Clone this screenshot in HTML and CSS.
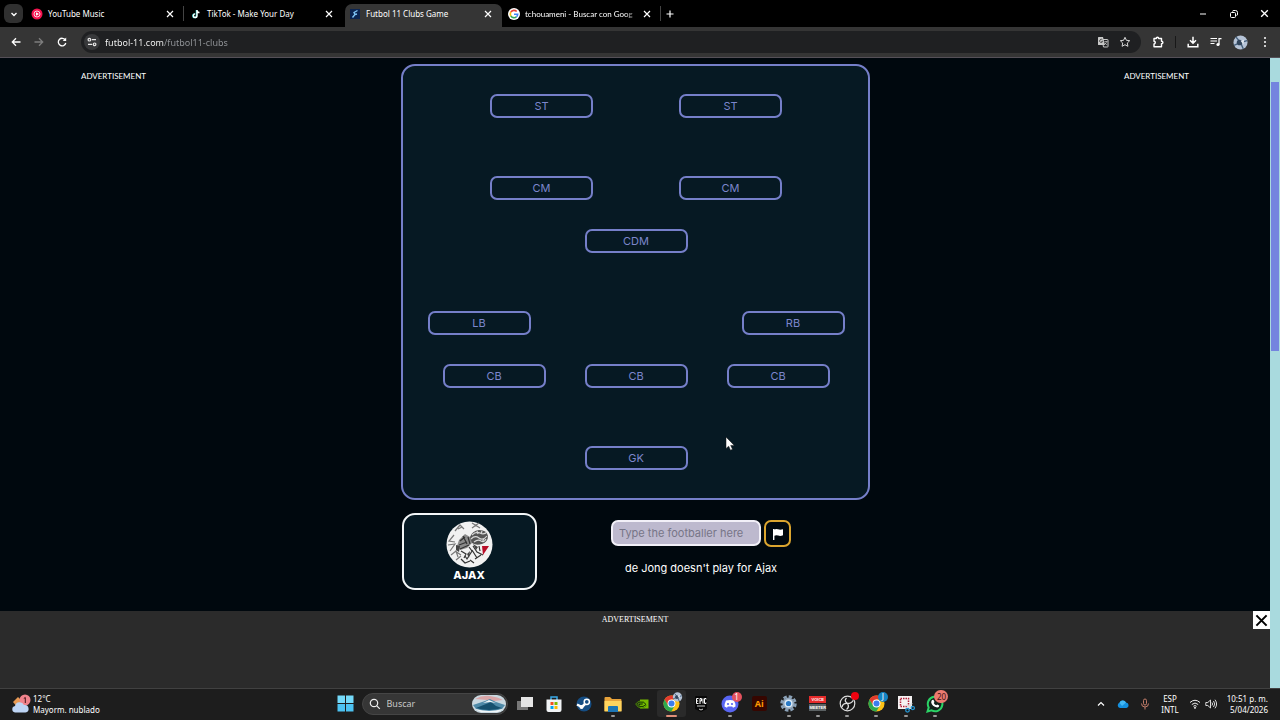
FILE: index.html
```
<!DOCTYPE html>
<html lang="en">
<head>
    <meta charset="UTF-8">
    <meta name="viewport" content="width=device-width, initial-scale=1.0">
    <title>Futbol 11 Clubs Game</title>
    <link rel="stylesheet" href="styles.css">
</head>
<body>
    <!-- Shared icons -->
    <svg class="sprite" aria-hidden="true">
        <symbol id="close" viewBox="0 0 10 10"><path d="M2 2l6 6M8 2L2 8" stroke="currentColor" stroke-width="1.2" fill="none"/></symbol>
        <symbol id="chrome" viewBox="0 0 18 18">
            <circle cx="9" cy="9" r="8.5" fill="#fbc116"/>
            <path d="M1.6 4.8A8.5 8.5 0 0 1 16.4 4.8H9L5.4 11z" fill="#e33b2e"/>
            <path d="M1.6 4.8A8.5 8.5 0 0 0 8.8 17.5L12.6 11H5.4z" fill="#2da94f"/>
            <circle cx="9" cy="9" r="4.2" fill="#fff"/>
            <circle cx="9" cy="9" r="3.2" fill="#3b7ded"/>
        </symbol>
        <symbol id="avatar" viewBox="0 0 16 16">
            <circle cx="8" cy="8" r="7.5" fill="#b5c3d6"/>
            <path d="M8 8L3 2M8 8L15 6M8 8l3 7M8 8l-7 3" stroke="#46617d" stroke-width="1.5"/>
            <circle cx="7" cy="8" r="3" fill="#31455c"/>
            <path d="M8 6l4-1-1 5z" fill="#e3eaf2"/>
        </symbol>
    </svg>

    <!-- Tab strip -->
    <header class="tab-strip">
        <button class="tab-search" aria-label="Search tabs">
            <svg width="10" height="10" viewBox="0 0 10 10"><path d="M2.5 4L5 6.500 7.500 4" fill="none" stroke="#fff" stroke-width="1.400"/></svg>
        </button>
        <div class="tab divided">
            <svg width="12" height="12" viewBox="0 0 12 12"><circle cx="6" cy="6" r="5.500" fill="#f5134f"/><circle cx="6" cy="6" r="3" fill="none" stroke="#fff" stroke-width=".8"/><path d="M5 4.300L8 6 5 7.700z" fill="#fff"/></svg>
            <button class="tab-title">YouTube Music</button>
            <button class="tab-close" aria-label="Close tab"><svg width="10" height="10"><use href="#close"/></svg></button>
        </div>
        <div class="tab">
            <svg width="12" height="12" viewBox="0 0 12 12"><path d="M6.500 2v5.700a1.800 1.800 0 1 1-1.800-1.800" fill="none" stroke="#26d6d0" stroke-width="1.500"/><path d="M7 2v5.700a1.800 1.800 0 1 1-1.800-1.800M7 2.300Q7.500 4.500 9.500 4.500" fill="none" stroke="#fff" stroke-width="1.400"/></svg>
            <button class="tab-title">TikTok - Make Your Day</button>
            <button class="tab-close" aria-label="Close tab"><svg width="10" height="10"><use href="#close"/></svg></button>
        </div>
        <div class="tab active">
            <svg width="12" height="12" viewBox="0 0 12 12"><rect x="1" y="1" width="10" height="10" fill="#0b2450"/><path d="M8.500 2.500L5 4.500l1 2-2.500 3M6 6.500l2-.5" fill="none" stroke="#7fc4f5" stroke-width="1.400"/></svg>
            <button class="tab-title">Futbol 11 Clubs Game</button>
            <button class="tab-close" aria-label="Close tab"><svg width="10" height="10"><use href="#close"/></svg></button>
        </div>
        <div class="tab divided">
            <svg width="12" height="12" viewBox="0 0 12 12"><circle cx="6" cy="6" r="6" fill="#fff"/><g fill="none" stroke-width="1.600"><path d="M8.700 3.500A3.700 3.700 0 0 0 2.800 4.200" stroke="#ea4335"/><path d="M2.800 4.200a3.700 3.700 0 0 0 0 3.600" stroke="#fbbc05"/><path d="M2.800 7.800a3.700 3.700 0 0 0 5.600 1" stroke="#34a853"/><path d="M8.400 8.800A3.700 3.700 0 0 0 9.700 6.200H6" stroke="#4285f4"/></g></svg>
            <button class="tab-title faded">tchouameni - Buscar con Goog</button>
            <button class="tab-close" aria-label="Close tab"><svg width="10" height="10"><use href="#close"/></svg></button>
        </div>
        <button class="new-tab" aria-label="New tab">
            <svg width="10" height="10" viewBox="0 0 10 10"><path d="M5 1.500v7M1.500 5h7" stroke="#fff" stroke-width="1.200"/></svg>
        </button>
        <div class="window-controls">
            <button aria-label="Minimize"><svg width="10" height="10" viewBox="0 0 10 10"><path d="M2 5h6" stroke="#fff"/></svg></button>
            <button aria-label="Restore"><svg width="10" height="10" viewBox="0 0 10 10" fill="none" stroke="#fff"><rect x="1.500" y="3.500" width="5" height="5" rx="1"/><path d="M3.500 2.500Q3.500 1.500 5 1.500h1.500q2 0 2 2V5q0 1.500-1 1.500"/></svg></button>
            <button aria-label="Close window"><svg width="11" height="11"><use href="#close"/></svg></button>
        </div>
    </header>

    <!-- Address bar -->
    <nav class="toolbar">
        <button aria-label="Back"><svg width="12" height="12" viewBox="0 0 12 12"><path d="M10.500 6H2.500M6 2.300L2.300 6 6 9.700" fill="none" stroke="#fff" stroke-width="1.300"/></svg></button>
        <button aria-label="Forward"><svg width="12" height="12" viewBox="0 0 12 12"><path d="M1.500 6h8M6 2.300L9.700 6 6 9.700" fill="none" stroke="#7d7d7d" stroke-width="1.300"/></svg></button>
        <button aria-label="Reload"><svg width="12" height="12" viewBox="0 0 12 12"><path d="M9.300 4A3.800 3.800 0 1 0 9.800 7" fill="none" stroke="#fff" stroke-width="1.300"/><path d="M10.200 1.500V5H6.700z" fill="#fff"/></svg></button>
        <div class="address">
            <button class="site-info" aria-label="Site information">
                <svg width="10" height="10" viewBox="0 0 10 10" fill="none" stroke="#e8e8e8" stroke-width="1.200"><circle cx="2.400" cy="2.700" r="1.300"/><path d="M4.800 2.700H9M1 7.300h4.200"/><circle cx="7.600" cy="7.300" r="1.300"/></svg>
            </button>
            <input class="url" type="text" aria-label="Address" value="futbol-11.com/futbol11-clubs">
            <button aria-label="Translate"><svg width="12" height="12" viewBox="0 0 12 12"><path d="M5 3.500h5.500q.5 0 .5.500v6.500q0 .5-.5.500H6.500z" fill="none" stroke="#c8c8c8"/><path d="M1.500 1H6l2 8H1.500Q1 9 1 8.500v-7Q1 1 1.500 1z" fill="#c8c8c8"/><path d="M5.500 4A1.600 1.600 0 1 0 5.700 5.500H4.300" fill="none" stroke="#333" stroke-width=".8"/><path d="M7.500 5.500h3M9.500 5.500q0 2-2 3M8 7l2 2" fill="none" stroke="#c8c8c8" stroke-width=".7"/></svg></button>
            <button aria-label="Bookmark"><svg width="12" height="12" viewBox="0 0 12 12"><path d="M6 1.300l1.400 3 3.300.4-2.400 2.300.6 3.300L6 8.700l-2.900 1.600.6-3.300L1.300 4.700l3.300-.4z" fill="none" stroke="#d8d8d8"/></svg></button>
        </div>
        <button class="extensions" aria-label="Extensions"><svg width="12" height="12" viewBox="0 0 12 12"><path d="M2 2.500h2.300q0-1.300 1.200-1.300t1.200 1.300H9.500v2.800q1.400 0 1.400 1.200T9.500 7.700v3H2V8q1.300-.1 1.300-1.400T2 5.200z" fill="none" stroke="#fff" stroke-width="1.400" stroke-linejoin="round"/></svg></button>
        <button aria-label="Downloads"><svg width="12" height="12" viewBox="0 0 12 12"><path d="M6 .8v6M3 4.300l3 3 3-3M1.200 7.700v3h9.600v-3" fill="none" stroke="#fff" stroke-width="1.500"/></svg></button>
        <button aria-label="Media"><svg width="12" height="12" viewBox="0 0 12 12"><path d="M.5 2.500h6.500M.5 5h6.500M.5 7.500h4M9 8.500V2.700h2.500" fill="none" stroke="#fff" stroke-width="1.200"/><circle cx="8" cy="8.500" r="1.600" fill="#fff"/></svg></button>
        <button aria-label="Profile"><svg width="15" height="15"><use href="#avatar"/></svg></button>
        <button aria-label="Menu"><svg width="12" height="12" viewBox="0 0 12 12" fill="#fff"><circle cx="6" cy="2" r="1"/><circle cx="6" cy="6" r="1"/><circle cx="6" cy="10" r="1"/></svg></button>
    </nav>

    <!-- Page -->
    <div class="viewport">
        <div class="page">
            <div class="columns">
                <aside class="side-ad">ADVERTISEMENT</aside>
                <main class="game">
                    <section class="board">
                        <div class="line forwards"><span class="slot">ST</span><span class="slot">ST</span></div>
                        <div class="sector">
                            <div class="line forwards"><span class="slot">CM</span><span class="slot">CM</span></div>
                            <div class="line"><span class="slot">CDM</span></div>
                        </div>
                        <div class="sector">
                            <div class="line backs"><span class="slot">LB</span><span class="slot">RB</span></div>
                            <div class="line centre-backs"><span class="slot">CB</span><span class="slot">CB</span><span class="slot">CB</span></div>
                        </div>
                        <div class="line"><span class="slot">GK</span></div>
                        <svg class="cursor" width="10" height="16" viewBox="0 0 10 16"><path d="M1 1v11.500l2.700-2.300 1.800 4 2-.9-1.800-3.900H9.300z" fill="#fff" stroke="#111" stroke-width=".5"/></svg>
                    </section>
                    <section class="controls">
                        <div class="club">
                            <svg width="47" height="47" viewBox="0 0 47 47">
                                <circle cx="23.500" cy="23.500" r="23" fill="#f1f1f1"/>
                                <g fill="none" stroke="#777" stroke-width="1.200">
                                    <path d="M9 10l5-6 4 4M12 8l4-2M26 7l7-5M26 2l8 5"/>
                                    <path d="M8 14l-5 6 6 1M2 24l7-1-5 7M5 34l5-4 2 6M10 39l5-4M9 30l6 4"/>
                                </g>
                                <!-- hair -->
                                <path d="M24 16q2-6 9-7 8 0 9 6 0 6-6 8-6 2-10-1-3-2-2-6z" fill="#555"/>
                                <path d="M26 14q4-4 8-2t7-1M25 18q4-4 8-1t8-2M28 21q4-3 7-1t5-2M31 10l1 3M36 10l-1 3M38 18l-2 3" fill="none" stroke="#d8d8d8" stroke-width="1.200"/>
                                <!-- helmet and face -->
                                <path d="M13 19l6-6 5 3 2 6-5 5-7 2-3-4z" fill="#8a8a8a"/>
                                <path d="M14 20l5-4M13 24l8-3M14 28l9-4M17 15l4 8M22 16l2 7" fill="none" stroke="#333" stroke-width="1.200"/>
                                <path d="M15 30l5 3-2 4M23 26l3 4-5 8-2-3M27 25l4 6 6 3M26 29l5 8M29 38l6-4M24 39l4 3M33 25l1 5M15 38l4 4 5-2" fill="none" stroke="#333" stroke-width="1.200"/>
                                <path d="M10 24l4 1-1 6-3-2zM27 23l5 3-2 3zM21 33l3-3-1 7z" fill="#444"/>
                                <path d="M36 25h7l-6 9z" fill="#b80d28"/>
                            </svg>
                            <strong>AJAX</strong>
                        </div>
                        <form class="guess">
                            <div class="guess-row">
                                <input type="text" placeholder="Type the footballer here" aria-label="Footballer">
                                <button type="button" aria-label="Give up"><svg width="12" height="12" viewBox="0 0 12 12"><path d="M1 1h1.400v.4Q4 .5 6 1.300t5 0v6q-2.500 1-4.800.3T2.400 7.800V12H1z" fill="#fff"/></svg></button>
                            </div>
                            <p>de Jong doesn't play for Ajax</p>
                        </form>
                    </section>
                </main>
                <aside class="side-ad">ADVERTISEMENT</aside>
            </div>
            <div class="bottom-ad">
                <span>ADVERTISEMENT</span>
                <button aria-label="Close ad"><svg width="17" height="17"><use href="#close"/></svg></button>
            </div>
        </div>
        <div class="scrollbar"><div class="thumb"></div></div>
    </div>

    <!-- Taskbar -->
    <footer class="taskbar">
        <button class="weather">
            <svg width="20" height="20" viewBox="0 0 20 20"><path d="M2 8l5-5 6 6-6 5z" fill="#e79a54"/><circle cx="14" cy="6" r="5.500" fill="#f0838c"/><path d="M12.800 4.500L14.300 3.500V9" fill="none" stroke="#44141a" stroke-width="1"/><path d="M4 18.500a3.300 3.300 0 0 1 0-6.500 4.800 4.800 0 0 1 9-1 3.800 3.800 0 0 1 1.500 7.500z" fill="#bed5f5"/></svg>
            <span>12°C<br>Mayorm. nublado</span>
        </button>
        <div class="apps">
            <button class="start" aria-label="Start"><svg width="17" height="17" viewBox="0 0 17 17" fill="#4cc2f1"><path d="M.5.500h7.500V8H.5zM9 .5h7.500V8H9z" fill="#74dafa"/><path d="M.5 9h7.500v7.500H.5zM9 9h7.500v7.500H9z"/></svg></button>
            <div class="search">
                <svg width="12" height="12" viewBox="0 0 12 12"><circle cx="5" cy="5" r="3.700" fill="none" stroke="#eee" stroke-width="1.200"/><path d="M7.800 7.800l3 3" stroke="#eee" stroke-width="1.200"/></svg>
                <input type="text" placeholder="Buscar" aria-label="Buscar">
                <svg width="34" height="18" viewBox="0 0 34 18"><rect width="34" height="18" rx="9" fill="#c9d8e0"/><path d="M3 4Q10 0 18 1t13 4l-9 1-7-1z" fill="#d9a6a8"/><path d="M1 10l12-4 5-2 6 3 9 3-3 4q-12 4-26 0z" fill="#4f8aa8"/><path d="M4 13l10-4 5-2 5 4 6 2q-13 4-26 0z" fill="#16506e"/><path d="M11 8l6-3 7 3-6-1zM3 14q14 4 28 0l-5 3H9z" fill="#f0f5f7"/></svg>
            </div>
            <ul class="pinned">
                <li><button aria-label="Task view"><svg width="18" height="18" viewBox="0 0 18 18"><rect x="1" y="6" width="11" height="9" fill="#777"/><rect x="5" y="2" width="12" height="10" fill="#e5e5e5"/></svg></button></li>
                <li><button aria-label="Store"><svg width="18" height="18" viewBox="0 0 18 18"><path d="M6 5V2h6v3" fill="none" stroke="#38a9e8" stroke-width="1.500"/><path d="M1.500 4.500h15V15q0 2-2 2h-11q-2 0-2-2z" fill="#f1f3f5"/><path d="M5.500 7h3v3h-3z" fill="#f25022"/><path d="M9.500 7h3v3h-3z" fill="#7fba00"/><path d="M5.500 11h3v3h-3z" fill="#00a4ef"/><path d="M9.500 11h3v3h-3z" fill="#ffb900"/></svg></button></li>
                <li><button aria-label="Steam"><svg width="16" height="16" viewBox="0 0 16 16"><circle cx="8" cy="8" r="7.500" fill="#154d83"/><path d="M1 8.500l5 2.500 4-4" fill="none" stroke="#fff" stroke-width="2.500"/><circle cx="5.500" cy="11" r="2" fill="#fff"/><circle cx="10.800" cy="5.800" r="2.600" fill="#154d83" stroke="#fff" stroke-width="1.500"/></svg></button></li>
                <li class="open"><button aria-label="Files"><svg width="18" height="18" viewBox="0 0 18 18"><path d="M.5 3q0-1 1-1H6l2 2h8.500q1 0 1 1v11h-17z" fill="#e8a33a"/><path d="M.5 6h17v10.500H.5z" fill="#ffd45e"/><path d="M4 12q0-1 1-1h8q1 0 1 1v5H4z" fill="#1d76b5"/></svg></button></li>
                <li><button aria-label="Nvidia"><svg width="14" height="14" viewBox="0 0 14 14"><rect x="5" y="2.500" width="8.500" height="9" fill="#76b900"/><path d="M5 4Q2 5 .7 7q2 4 6 4 3 0 5-2.500M5 5.500q5-1 6 2-2 2-4.500 2Q4 9.500 2.700 7 5 5 8 6.500L6.500 8 5 7" fill="none" stroke="#4e9200"/><path d="M5 5q4-1 6 2.500Q8 10.500 5 9.500M5 7h2.500" fill="none" stroke="#153400" stroke-width=".9"/></svg></button></li>
                <li class="open current"><button aria-label="Chrome"><svg width="17" height="17"><use href="#chrome"/></svg></button><svg class="badge" width="11" height="11"><use href="#avatar"/></svg></li>
                <li><button aria-label="Epic Games"><svg width="16" height="18" viewBox="0 0 16 18"><path d="M2 2q0-1 1-1h10q1 0 1 1v12l-6 3-6-3z" fill="#080808"/><path d="M5.500 3.500h-2v5h2M3.500 6h1.700M7 9V3.500h1.500V6H7M10 3.500v5M13 4.500v-1h-1.500v5H13v-1" fill="none" stroke="#fff" stroke-width="1"/><path d="M4 11h8M6 14l2 1 2-1" stroke="#ccc" fill="none"/></svg></button></li>
                <li class="open"><button aria-label="Discord"><svg width="18" height="18" viewBox="0 0 18 18"><circle cx="9" cy="9" r="8.500" fill="#5865f2"/><path d="M5 5.500q4-1.200 8 0 1.700 3 1.500 6l-2.500 1.300-.8-1.300H6.800L6 12.800l-2.500-1.300q0-3 1.500-6z" fill="#fff"/><circle cx="7" cy="9" r="1.100" fill="#5865f2"/><circle cx="11" cy="9" r="1.100" fill="#5865f2"/></svg></button><span class="badge red">1</span></li>
                <li><button aria-label="Illustrator" class="illustrator">Ai</button></li>
                <li class="open"><button aria-label="Settings"><svg width="17" height="17" viewBox="0 0 17 17"><circle cx="8.500" cy="8.500" r="7" fill="none" stroke="#8aa1b7" stroke-width="2.500" stroke-dasharray="3.500 2"/><circle cx="8.500" cy="8.500" r="6" fill="#91a6bb"/><circle cx="8.500" cy="8.500" r="4" fill="#dbe9f6"/><circle cx="8.500" cy="8.500" r="2.600" fill="#2879c5"/></svg></button></li>
                <li class="open"><button aria-label="Voicemeeter" class="voicemeeter"><span>VOICE</span><span>MEETER</span></button></li>
                <li class="open"><button aria-label="OBS"><svg width="17" height="17" viewBox="0 0 17 17"><circle cx="8.500" cy="8.500" r="7.300" fill="#171717" stroke="#ddd" stroke-width="1.200"/><path d="M7.500 3q-3 3 1 5.500 4 0 5.500-3M8.500 8.500q2.300 3.500-1 6M8.500 8.500Q4 8 3 12" fill="none" stroke="#ddd" stroke-width="1.300"/></svg></button><span class="badge record"></span></li>
                <li class="open"><button aria-label="Chrome J"><svg width="17" height="17"><use href="#chrome"/></svg></button><span class="badge blue">J</span></li>
                <li class="open"><button aria-label="Snipping Tool"><svg width="18" height="18" viewBox="0 0 18 18"><rect x="1" y="1" width="14" height="13" fill="#f5f2f2"/><rect x="3.500" y="3.500" width="8" height="8" fill="none" stroke="#b21e38" stroke-width="1.500" stroke-dasharray="1.500 1"/><path d="M9 10l6 3M15 8l-4 6" stroke="#ddd" stroke-width="1.500"/><circle cx="10.500" cy="15.300" r="1.800" fill="none" stroke="#2493cf" stroke-width="1.300"/><circle cx="15.800" cy="13" r="1.600" fill="none" stroke="#2493cf" stroke-width="1.300"/></svg></button></li>
                <li class="open"><button aria-label="WhatsApp"><svg width="18" height="18" viewBox="0 0 18 18"><path d="M1.500 16.500l1.200-4A7.300 7.300 0 1 1 5.600 15.400z" fill="#14201a" stroke="#2bd366" stroke-width="2"/><path d="M6 5l1.400-.3L8.500 7l-.8 1q1 1.700 2.500 2.300l1-.9 2 1q.2 2-2 2.100Q6 11.500 5.200 7.500 5.200 6 6 5z" fill="#fff"/></svg></button><span class="badge red wide">20</span></li>
            </ul>
        </div>
        <div class="tray">
            <button aria-label="Hidden icons"><svg width="12" height="12" viewBox="0 0 12 12"><path d="M3 7.500l3-3 3 3" fill="none" stroke="#fff" stroke-width="1.200"/></svg></button>
            <button aria-label="OneDrive"><svg width="12" height="12" viewBox="0 0 12 12"><path d="M3 10A2.700 2.700 0 0 1 2.500 4.800 3.600 3.600 0 0 1 9 4.500 2.800 2.800 0 0 1 9.500 10z" fill="#1490df"/><path d="M2.500 4.800A3.600 3.600 0 0 1 9 4.500L5 8z" fill="#42b8f5"/></svg></button>
            <button aria-label="Microphone"><svg width="12" height="12" viewBox="0 0 12 12" fill="none" stroke="#c27c68"><rect x="4.500" y="1" width="3" height="6" rx="1.500"/><path d="M2.500 5.500q0 3.500 3.500 3.500t3.500-3.500M6 9v2.500"/></svg></button>
            <button class="language">ESP<br>INTL</button>
            <button class="status" aria-label="Network and sound">
                <svg width="12" height="12" viewBox="0 0 12 12" fill="none" stroke="#eee"><path d="M1 4.500q5-4.500 10 0M2.800 6.500q3.200-3 6.400 0M4.400 8.300q1.600-1.500 3.200 0"/><circle cx="6" cy="9.800" r=".6" fill="#eee"/></svg>
                <svg width="12" height="12" viewBox="0 0 12 12" fill="none" stroke="#eee"><path d="M.8 4.500h2L5.500 2v8L2.800 7.500h-2zM7 4.500q1.200 1.500 0 3M8.500 3q2.500 3 0 6M10 1.700q3.200 4.300 0 8.600" stroke-width=".9"/></svg>
            </button>
            <button class="clock">10:51 p. m.<br>5/04/2026</button>
        </div>
    </footer>
</body>
</html>
```
FILE: styles.css
```
* {
    box-sizing: border-box;
    margin: 0;
    padding: 0;
}

body {
    display: flex;
    flex-direction: column;
    height: 100vh;
    overflow: hidden;
    background-color: #00080e;
    color: #fff;
    font-family: "Noto Sans", "Open Sans", sans-serif;
    font-size: 9px;
}

button {
    border: none;
    background: none;
    color: inherit;
    font: inherit;
    cursor: pointer;
}

input {
    min-width: 0;
    border: none;
    outline: none;
    background: none;
    font: inherit;
}

svg {
    display: block;
    flex: none;
}

.sprite {
    position: absolute;
    width: 0;
    height: 0;
}

/* Tab strip */
.tab-strip {
    display: flex;
    align-items: center;
    height: 27px;
    padding-left: 4px;
    background-color: #000;
}

.tab-search {
    display: grid;
    place-items: center;
    width: 19px;
    height: 19px;
    margin-right: 4px;
    border-radius: 6px;
    background-color: #303030;
}

.tab {
    display: flex;
    align-items: center;
    gap: 5px;
    flex: 0 1 157px;
    min-width: 0;
    height: 15px;
    margin-right: 2px;
    padding: 0 8px 0 4px;
    border-right: 1px solid transparent;
}

.tab.divided {
    border-right-color: #444;
}

.tab.active {
    align-self: flex-end;
    height: 23px;
    padding-bottom: 4px;
    border-radius: 7px 7px 0 0;
    background-color: #353535;
}

.tab-title {
    flex: 1;
    font-size: 8px;
    text-align: left;
    white-space: nowrap;
}

.faded {
    font-family: Lato, sans-serif;
    mask-image: linear-gradient(to right, #000 90%, transparent);
}

.new-tab {
    padding: 0 2px;
}

.window-controls {
    display: flex;
    margin-left: auto;
}

.window-controls button {
    display: grid;
    place-items: center;
    width: 31px;
    height: 27px;
}

/* Address bar */
.toolbar {
    display: flex;
    align-items: center;
    gap: 11px;
    height: 31px;
    padding: 0 9px 0 10px;
    border-bottom: 1px solid #555058;
    background-color: #353535;
}

.address {
    display: flex;
    flex: 1;
    align-items: center;
    gap: 10px;
    height: 22px;
    margin-left: 2px;
    padding: 0 10px 0 3px;
    border-radius: 11px;
    background-color: #1f2022;
}

.site-info {
    display: grid;
    place-items: center;
    width: 16px;
    height: 16px;
    border-radius: 8px;
    background-color: #38393b;
}

.url {
    flex: 1;
    margin-left: -5px;
    background-image: linear-gradient(to right, #fff 59px, #94979b 59px);
    background-clip: text;
    color: transparent;
}

.extensions {
    padding-right: 11px;
    border-right: 1px solid #181818;
}

/* Page */
.viewport {
    display: flex;
    flex: 1;
    min-height: 0;
}

.page {
    display: flex;
    flex: 1;
    flex-direction: column;
    font-family: Inter, sans-serif;
}

.columns {
    display: grid;
    flex: 1;
    grid-template-columns: 227px 1fr 227px;
}

.side-ad {
    padding-top: 12px;
    font-family: Lato, sans-serif;
    font-size: 8px;
    line-height: 12px;
    text-align: center;
}

.game {
    width: 100%;
    max-width: 469px;
    margin: 0 auto;
    padding-top: 6px;
}

.board {
    position: relative;
    display: flex;
    flex-direction: column;
    gap: 58px;
    padding: 28px 0 28px 2px;
    border: 2px solid #757fc9;
    border-radius: 14px;
    background-color: #061923;
}

.sector {
    display: flex;
    flex-direction: column;
    gap: 29px;
}

.line {
    display: flex;
    justify-content: center;
}

.forwards {
    gap: 86px;
}

.backs {
    gap: 211px;
}

.centre-backs {
    gap: 39px;
}

.slot {
    width: 103px;
    height: 24px;
    border: 2px solid #757fc9;
    border-radius: 7px;
    color: #7c86cc;
    font-size: 11px;
    line-height: 20px;
    text-align: center;
}

.cursor {
    position: absolute;
    top: 370px;
    left: 322px;
}

.controls {
    display: flex;
    margin-top: 13px;
    padding-left: 1px;
}

.club {
    display: flex;
    flex-direction: column;
    align-items: center;
    width: 135px;
    height: 77px;
    padding-top: 6px;
    border: 2px solid #f3f6f7;
    border-radius: 13px;
    background-color: #061923;
}

.club strong {
    font-size: 11px;
    font-weight: 800;
    line-height: 15px;
}

.guess {
    display: flex;
    flex: 1;
    flex-direction: column;
    align-items: center;
    gap: 14px;
    padding: 7px 4px 0 0;
    font-size: 11px;
}

.guess-row {
    display: flex;
    gap: 3px;
}

.guess-row input {
    width: 150px;
    height: 26px;
    padding: 0 6px;
    border: 2px solid #f2f0f8;
    border-radius: 7px;
    background-color: #bdb9ce;
}

.guess-row input::placeholder {
    color: #777587;
}

.guess-row button {
    display: grid;
    place-items: center;
    width: 27px;
    height: 27px;
    border: 2px solid #dba52f;
    border-radius: 7px;
}

.bottom-ad {
    position: relative;
    height: 77px;
    background-color: #2b2b2b;
    font-family: "Liberation Serif", serif;
    font-size: 8px;
    line-height: 18px;
    text-align: center;
}

.bottom-ad button {
    position: absolute;
    top: 0;
    right: 0;
    width: 17px;
    height: 18px;
    background-color: #fff;
    color: #000;
}

.scrollbar {
    width: 10px;
    padding: 24px 1px;
    background-color: #a9dade;
}

.thumb {
    height: 269px;
    background-color: #7484df;
}

/* Taskbar */
.taskbar {
    display: grid;
    grid-template-columns: 1fr auto 1fr;
    align-items: center;
    height: 32px;
    padding-bottom: 2px;
    border-top: 1px solid #414141;
    background-color: #1d1d1d;
    font-size: 8px;
    line-height: 11px;
}

.weather {
    display: flex;
    align-items: center;
    gap: 2px;
    padding-left: 11px;
    text-align: left;
}

.apps {
    display: flex;
    align-items: center;
}

.start {
    display: grid;
    place-items: center;
    width: 29px;
    margin-right: 2px;
}

.search {
    display: flex;
    align-items: center;
    gap: 6px;
    width: 146px;
    height: 22px;
    margin-right: 3px;
    padding: 0 1px 0 6px;
    border: 1px solid #454545;
    border-radius: 11px;
    background-color: #363636;
}

.search input {
    flex: 1;
    color: #fff;
    font-size: 9px;
}

.search input::placeholder {
    color: #c8c8c8;
}

.pinned {
    display: flex;
    width: 439px;
    list-style: none;
}

.pinned li {
    position: relative;
    display: grid;
    flex: 1;
    place-items: center;
    height: 27px;
    border-radius: 3px;
}

.pinned .current {
    background-color: #2a2a2a;
}

.open::after {
    content: "";
    position: absolute;
    bottom: 0;
    width: 4px;
    height: 2px;
    border-radius: 1px;
    background-color: #999;
}

.current::after {
    width: 11px;
    background-color: #e08f79;
}

.badge {
    position: absolute;
    top: 2px;
    right: 3px;
    min-width: 10px;
    height: 10px;
    border-radius: 5px;
    font-size: 8px;
    line-height: 10px;
    text-align: center;
}

.red {
    background-color: #e4525e;
}

.wide {
    top: 0;
    right: 1px;
    width: 14px;
    height: 13px;
    border-radius: 7px;
    background-color: #ec7a70;
    color: #3a1110;
    line-height: 13px;
}

.blue {
    background-color: #1584c4;
}

.record {
    min-width: 8px;
    height: 8px;
    background-color: #f00310;
}

.illustrator {
    width: 15px;
    height: 15px;
    border-radius: 2px;
    background-color: #360600;
    color: #ff9a00;
    font-size: 9px;
    font-weight: bold;
    line-height: 15px;
}

.voicemeeter {
    width: 17px;
    background-color: #5a6062;
    font-family: "Liberation Sans", sans-serif;
    font-size: 4px;
    font-weight: bold;
    line-height: 7px;
}

.voicemeeter span {
    display: block;
}

.voicemeeter span:first-child {
    border-bottom: 1px solid #1d1d1d;
    background-color: #e62b2b;
}

.tray {
    display: flex;
    align-items: center;
    justify-content: flex-end;
    gap: 10px;
    padding-right: 12px;
}

.status {
    display: flex;
    gap: 4px;
}

.clock {
    text-align: right;
}
```
